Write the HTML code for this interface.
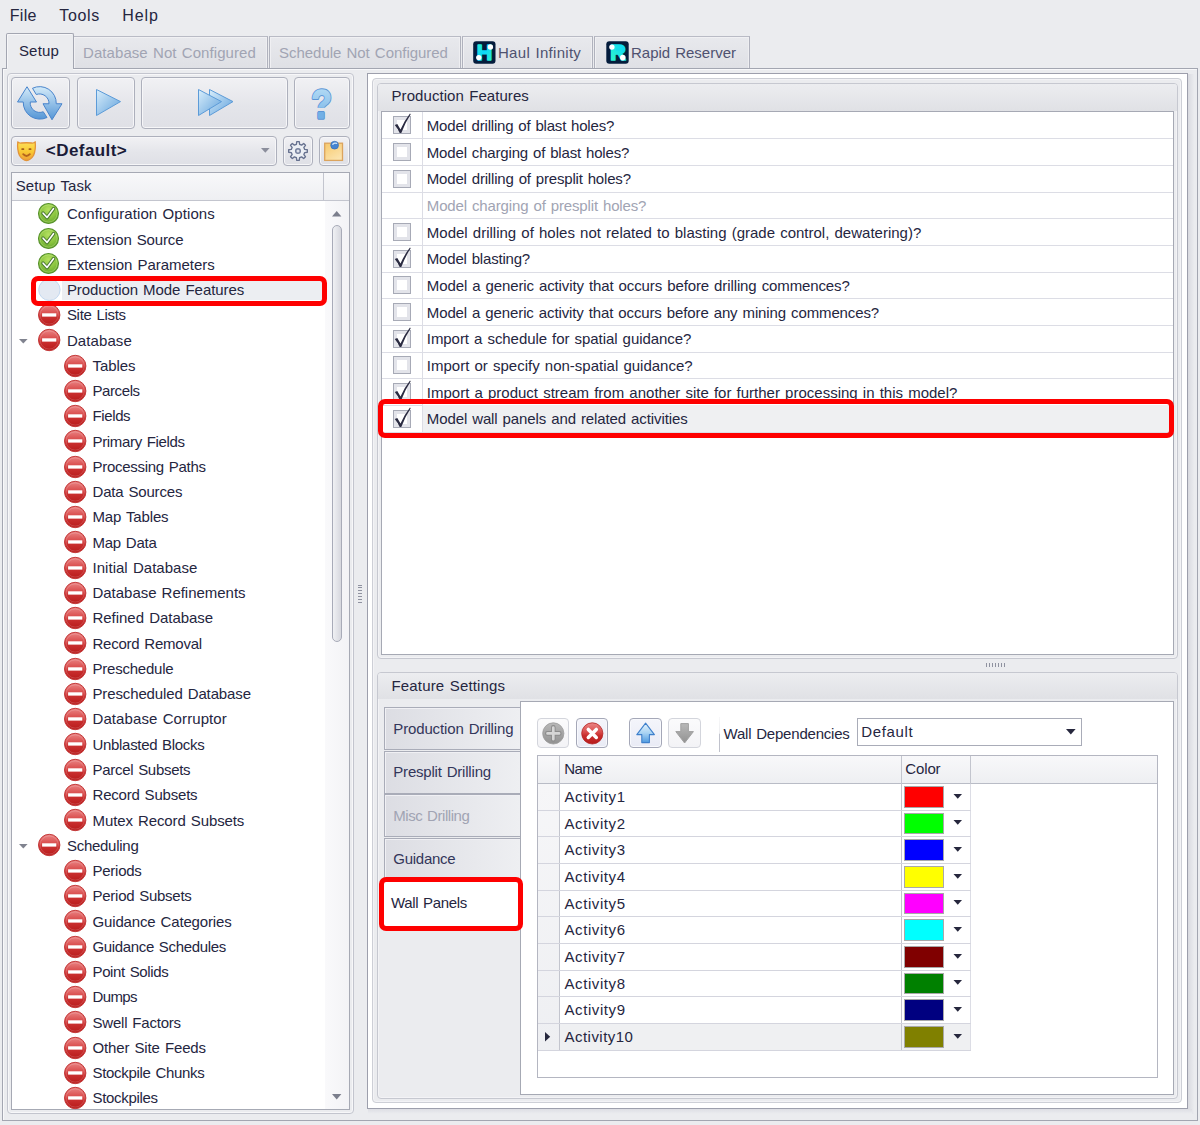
<!DOCTYPE html><html><head><meta charset="utf-8"><title>Setup</title><style>
*{box-sizing:border-box;margin:0;padding:0}
html,body{width:1200px;height:1125px;overflow:hidden}
body{background:#ebecef;font-family:"Liberation Sans",sans-serif;font-size:15px;color:#25263f;word-spacing:1px;position:relative}
.abs,.abs>*{position:absolute}
.t{white-space:nowrap;line-height:20px;height:20px}
.dis{color:#a1a4b3}
.tab{top:36px;height:32px;border:1px solid #b0b2bd;border-top-color:#b9bbc5;border-bottom:none;background:linear-gradient(#e8e9ed,#dfe0e5);box-shadow:inset 1px 1px 0 #f0f0f3,inset -1px 0 0 #eeeef1}
.tabsel{top:33px;height:36px;border:1px solid #a3a6b1;border-bottom:none;background:#ebecef;border-radius:2px 2px 0 0;box-shadow:inset 1px 1px 0 #f6f6f8}
.panel{border:1px solid #a3a6b1;box-shadow:inset 1px 1px 0 #f8f8fa}
.lpanel{border:1px solid #c3c5ce;border-radius:4px;box-shadow:inset 0 0 0 1px #f7f7f9}
.btn{border:1px solid #adb0bc;border-radius:4px;background:linear-gradient(#f1f1f4,#e4e5ea 55%,#dfe0e6);box-shadow:inset 0 0 0 1px #f6f6f8}
.box{border:1px solid #a6a9b4;background:#fff}
.hdr{background:linear-gradient(#f8f8fa,#eeeff2);border-bottom:1px solid #c3c5ce}
.gb{border:1px solid #c6c8d0;border-radius:4px;background:#ebecef;box-shadow:inset 0 0 0 1px #f3f3f6}
.gbh{background:linear-gradient(#ecedf0,#e0e1e5);border-radius:3px 3px 0 0}
.red{border:5.6px solid #fe0000;border-radius:7px}
.ln{background:#dcdde5;height:1px}
.vl{background:#dcdde5;width:1px}
.vtab{left:384px;width:136px;height:43px;border:1px solid #a9acb8;border-right:none;background:linear-gradient(90deg,#dcdde3,#eeeff2);box-shadow:inset 1px 1px 0 #f0f0f4}
.cb{width:18px;height:18px;border:1px solid #a7aab6;background:#fff;box-shadow:inset 0 0 0 3px #e3e4ea}
svg{overflow:visible}
</style></head><body class="abs">
<svg width="0" height="0" style="left:0;top:0"><defs>
<linearGradient id="gBlue" x1="0" y1="0" x2="0" y2="1"><stop offset="0" stop-color="#d4ebf9"/><stop offset="1" stop-color="#5596d6"/></linearGradient>
<linearGradient id="gBlue2" x1="0" y1="0" x2="0" y2="1"><stop offset="0" stop-color="#bfe3f8"/><stop offset="1" stop-color="#6aaae2"/></linearGradient>
<linearGradient id="gBlue3" x1="0" y1="0" x2="0" y2="1"><stop offset="0" stop-color="#e6f3fc"/><stop offset="0.5" stop-color="#a9d3f3"/><stop offset="1" stop-color="#4f9ae0"/></linearGradient>
<linearGradient id="gBlueH" x1="0" y1="0" x2="1" y2="1"><stop offset="0" stop-color="#d9eefb"/><stop offset="1" stop-color="#62a2dc"/></linearGradient>
<linearGradient id="gRed" x1="0" y1="0" x2="0" y2="1"><stop offset="0" stop-color="#ea8686"/><stop offset="0.42" stop-color="#da4e4e"/><stop offset="0.6" stop-color="#c92e2e"/><stop offset="1" stop-color="#b71a1a"/></linearGradient>
<radialGradient id="gGreen" cx="0.5" cy="0.3" r="0.75"><stop offset="0" stop-color="#b4e060"/><stop offset="0.6" stop-color="#86c23c"/><stop offset="1" stop-color="#5f9e2a"/></radialGradient>
<linearGradient id="gGray" x1="0" y1="0" x2="0" y2="1"><stop offset="0" stop-color="#b8b8b8"/><stop offset="1" stop-color="#929292"/></linearGradient>
<linearGradient id="gTeal" x1="0" y1="0" x2="1" y2="1"><stop offset="0" stop-color="#35f7c4"/><stop offset="0.45" stop-color="#0ad6fb"/><stop offset="1" stop-color="#35f7c4"/></linearGradient>
<linearGradient id="gTeal2" x1="1" y1="0" x2="0" y2="1"><stop offset="0" stop-color="#05d2ff"/><stop offset="1" stop-color="#35f7c4"/></linearGradient>
<linearGradient id="gMask" x1="0" y1="0" x2="0" y2="1"><stop offset="0" stop-color="#fde05a"/><stop offset="0.55" stop-color="#f9c832"/><stop offset="1" stop-color="#ee9e38"/></linearGradient>
<linearGradient id="gNote" x1="0" y1="0" x2="0.6" y2="1"><stop offset="0" stop-color="#f7c96c"/><stop offset="1" stop-color="#fbe3ad"/></linearGradient>
<g id="icRed"><circle cx="11.2" cy="11" r="10.7" fill="url(#gRed)" stroke="#c43a3a" stroke-width="1"/><circle cx="11.2" cy="11" r="9.1" fill="none" stroke="#fff" stroke-opacity="0.16" stroke-width="1"/><rect x="4.1" y="9.3" width="14.2" height="3.3" fill="#fff"/></g>
<g id="icGreen"><circle cx="10.5" cy="10.5" r="10" fill="url(#gGreen)" stroke="#55902a" stroke-width="1.1"/><circle cx="10.5" cy="10.5" r="8.6" fill="none" stroke="#d8f0a0" stroke-opacity="0.35" stroke-width="1"/><path d="M5 10.2 L9 14.6 L15.6 5.6" fill="none" stroke="#4c7a30" stroke-width="3.5" stroke-linecap="round" stroke-linejoin="round"/><path d="M5.1 10.2 L9 14.4 L15.5 5.7" fill="none" stroke="#fff" stroke-width="1.6" stroke-linecap="round" stroke-linejoin="round"/></g>
<path id="chk" d="M1.8 8.9 L4.3 8.1 L7.5 13.6 Q11.4 4.6 17 -2.4 L17.7 -1.7 Q12.2 6.6 8.3 17.1 L6.7 17.1 Q4.8 12.6 1.8 8.9Z" fill="#2a2b41"/>
</defs></svg>
<div class="t" style="left:9.7px;top:5.6px;letter-spacing:0.31px;font-size:16px;word-spacing:0px;">File</div>
<div class="t" style="left:59.2px;top:5.6px;letter-spacing:0.69px;font-size:16px;word-spacing:0px;">Tools</div>
<div class="t" style="left:122.3px;top:5.6px;letter-spacing:0.90px;font-size:16px;word-spacing:0px;">Help</div>
<div class="panel" style="left:2px;top:68px;width:1196px;height:1053px"></div>
<div class="tab" style="left:73px;width:194.6px"></div>
<div class="t dis" style="left:83.0px;top:42.8px;letter-spacing:0.07px;">Database Not Configured</div>
<div class="tab" style="left:268.6px;width:192.0px"></div>
<div class="t dis" style="left:279.0px;top:42.8px;letter-spacing:-0.03px;">Schedule Not Configured</div>
<div class="tab" style="left:461.6px;width:131.0px"></div>
<div class="t" style="left:498.0px;top:42.8px;letter-spacing:0.29px;color:#4f5270">Haul Infinity</div>
<div class="tab" style="left:593.8px;width:155.8px"></div>
<div class="t" style="left:631.0px;top:42.8px;letter-spacing:-0.02px;color:#4f5270">Rapid Reserver</div>
<div class="tabsel" style="left:6px;width:68px"></div><div style="left:7px;top:68px;width:66px;height:2px;background:#ebecef"></div>
<div class="t" style="left:18.9px;top:40.7px;letter-spacing:0.20px;">Setup</div>
<svg style="left:473px;top:41px" width="23" height="23" viewBox="0 0 23 23"><rect x="0.2" y="0.3" width="22.3" height="22.4" rx="3" fill="#041c3c"/>
<text x="11.55" y="19.1" text-anchor="middle" font-family="Liberation Sans, sans-serif" font-weight="bold" font-size="21.5" fill="url(#gTeal)" stroke="url(#gTeal)" stroke-width="1.5" stroke-linejoin="round">H</text>
<circle cx="5.8" cy="16.6" r="2.7" fill="#fff"/><circle cx="17.4" cy="6" r="2.7" fill="#fff"/></svg>
<svg style="left:606px;top:41px" width="23" height="23" viewBox="0 0 23 23"><rect x="0.3" y="0.3" width="22.4" height="22.4" rx="3" fill="#041c3c"/>
<rect x="8" y="5.4" width="8.5" height="6.2" fill="#14dcec"/><text x="12.1" y="19.1" text-anchor="middle" font-family="Liberation Sans, sans-serif" font-weight="bold" font-size="21.5" fill="url(#gTeal2)" stroke="url(#gTeal2)" stroke-width="1.7" stroke-linejoin="round">R</text>
<circle cx="5.9" cy="6.1" r="2.7" fill="#fff"/><circle cx="16.8" cy="16.6" r="2.8" fill="#fff"/></svg>
<div class="lpanel" style="left:7px;top:73px;width:347px;height:1041px"></div>
<div class="btn" style="left:11px;top:77px;width:59px;height:52px"></div>
<div class="btn" style="left:77px;top:77px;width:58px;height:52px"></div>
<div class="btn" style="left:141px;top:77px;width:147px;height:52px"></div>
<div class="btn" style="left:294px;top:77px;width:56px;height:52px"></div>
<svg style="left:10px;top:76px" width="60" height="54" viewBox="0 0 60 54">
<path d="M17 10.75 L26.5 26 L20.25 26 A9.5 9.5 0 0 0 33.25 35.75 L37 41.5 A16.6 16.6 0 0 1 13.25 26 L7.5 26 Z" fill="url(#gBlue)" stroke="#4884cc" stroke-width="1" stroke-linejoin="round"/>
<path d="M42 43.75 L33 27.75 L39 27.75 A9.5 9.5 0 0 0 26.25 18.5 L22.5 12.25 A16.6 16.6 0 0 1 46.25 27.75 L52 27.75 Z" fill="url(#gBlue)" stroke="#4884cc" stroke-width="1" stroke-linejoin="round"/></svg>
<svg style="left:95px;top:88px" width="28" height="30" viewBox="0 0 28 30"><path d="M1.5 1.5 L25.5 13.6 L1.5 27.5Z" fill="url(#gBlueH)" stroke="#5c9bd8" stroke-width="1" stroke-linejoin="round"/></svg>
<svg style="left:197px;top:88px" width="38" height="30" viewBox="0 0 38 30"><path d="M12.5 1.5 L36 13.6 L12.5 27.5Z" fill="url(#gBlueH)" stroke="#5c9bd8" stroke-width="1" stroke-linejoin="round"/><path d="M1.5 1.5 L24.5 13.6 L1.5 27.5Z" fill="url(#gBlueH)" stroke="#5c9bd8" stroke-width="1" stroke-linejoin="round"/></svg>
<svg style="left:304px;top:80px" width="36" height="46" viewBox="0 0 36 46"><defs><clipPath id="cTop"><rect x="-20" y="-40" width="40" height="31"/></clipPath><clipPath id="cBot"><rect x="-20" y="-7.4" width="40" height="12"/></clipPath></defs>
<g transform="translate(17.6 38.3) scale(0.85 1)" font-family="Liberation Sans, sans-serif" font-weight="bold" font-size="39" text-anchor="middle" stroke-linejoin="round"><g transform="translate(0 -1.5)" clip-path="url(#cTop)"><text x="0" y="0" fill="#5c95d6" stroke="#5c95d6" stroke-width="3.4">?</text><text x="0" y="0" fill="url(#gBlue2)" stroke="url(#gBlue2)" stroke-width="1.5">?</text></g><g clip-path="url(#cBot)" aria-hidden="true"><text x="0" y="0" fill="#5c95d6" stroke="#5c95d6" stroke-width="3.4">?</text><text x="0" y="0" fill="#72b0e6" stroke="#72b0e6" stroke-width="1.5">?</text></g></g></svg>
<div class="btn" style="left:11px;top:136px;width:266px;height:30px"></div>
<div class="btn" style="left:283px;top:136px;width:30px;height:30px"></div>
<div class="btn" style="left:319px;top:136px;width:31px;height:30px"></div>
<div class="t" style="left:45.8px;top:141.2px;letter-spacing:0.44px;font-size:17px;font-weight:bold;color:#1a1b38">&lt;Default&gt;</div>
<svg style="left:260.5px;top:148.3px" width="9" height="5" viewBox="0 0 9 5"><path d="M0 0 H8.6 L4.3 4.8Z" fill="#8b8e9c"/></svg>
<svg style="left:17.2px;top:141px" width="19" height="20" viewBox="0 0 19 20"><path d="M0.8 0.8 Q2 2.3 4.5 2 Q9.5 1.5 14.5 2 Q17 2.3 18.2 0.8 Q19 9 16.5 14.5 Q13.5 19.3 9.5 19.5 Q5.5 19.3 2.5 14.5 Q0 9 0.8 0.8Z" fill="url(#gMask)" stroke="#e2943a" stroke-width="1.3" stroke-linejoin="round"/>
<rect x="4.4" y="7.3" width="2.8" height="1.6" rx="0.5" fill="#a5601c"/><rect x="11.6" y="7.3" width="2.8" height="1.6" rx="0.5" fill="#a5601c"/>
<path d="M6.2 13.2 Q9.5 16.8 12.8 13.2" fill="none" stroke="#b5651d" stroke-width="1.9" stroke-linecap="round"/></svg>
<svg style="left:286.85px;top:140px" width="22" height="22" viewBox="0 0 22 22"><path d="M17.71 9.39 L20.32 9.75 L20.32 12.25 L17.71 12.61 L16.88 14.61 L18.47 16.70 L16.70 18.47 L14.61 16.88 L12.61 17.71 L12.25 20.32 L9.75 20.32 L9.39 17.71 L7.39 16.88 L5.30 18.47 L3.53 16.70 L5.12 14.61 L4.29 12.61 L1.68 12.25 L1.68 9.75 L4.29 9.39 L5.12 7.39 L3.53 5.30 L5.30 3.53 L7.39 5.12 L9.39 4.29 L9.75 1.68 L12.25 1.68 L12.61 4.29 L14.61 5.12 L16.70 3.53 L18.47 5.30 L16.88 7.39Z" fill="#eceff4" stroke="#66718f" stroke-width="1.35" stroke-linejoin="round"/><circle cx="11" cy="11" r="2.3" fill="#dfe3ec" stroke="#76819e" stroke-width="1.5"/></svg>
<svg style="left:323px;top:139px" width="22" height="24" viewBox="0 0 22 24"><rect x="1.7" y="4.2" width="17.8" height="17.2" fill="url(#gNote)" stroke="#dba45e" stroke-width="1.3"/><circle cx="11.6" cy="6.2" r="3.9" fill="#4585d2" stroke="#3a70b6" stroke-width="0.7"/><path d="M9.8 5.2 Q11.4 3.4 13.6 4.4" fill="none" stroke="#cfe4f8" stroke-width="1.3" stroke-linecap="round"/></svg>
<div class="box" style="left:11px;top:172px;width:339px;height:938px"></div>
<div class="hdr" style="left:12px;top:173px;width:337px;height:28px"></div>
<div style="left:323px;top:173px;width:1px;height:27px;background:#c3c5ce"></div>
<div class="t" style="left:15.7px;top:176.3px;letter-spacing:0.11px;">Setup Task</div>
<div style="left:325px;top:201px;width:24px;height:908px;background:linear-gradient(90deg,#f9f9fb,#f3f3f6)"></div>
<svg style="left:332px;top:211px" width="10" height="6" viewBox="0 0 10 6"><path d="M0 5.4 H9.4 L4.7 0Z" fill="#7c7f8d"/></svg>
<svg style="left:331.5px;top:1094px" width="10" height="6" viewBox="0 0 10 6"><path d="M0 0 H9.4 L4.7 5.4Z" fill="#7c7f8d"/></svg>
<div style="left:332px;top:225px;width:10px;height:417px;border:1px solid #a8abb8;border-radius:5px;background:linear-gradient(90deg,#f0f1f4,#d6d7de)"></div>
<svg style="left:38.3px;top:202.7px" width="21" height="21"><use href="#icGreen"/></svg>
<div class="t" style="left:66.9px;top:204.3px;letter-spacing:0.09px;">Configuration Options</div>
<svg style="left:38.3px;top:228.0px" width="21" height="21"><use href="#icGreen"/></svg>
<div class="t" style="left:66.9px;top:229.6px;letter-spacing:-0.13px;">Extension Source</div>
<svg style="left:38.3px;top:253.2px" width="21" height="21"><use href="#icGreen"/></svg>
<div class="t" style="left:66.9px;top:254.8px;letter-spacing:-0.04px;">Extension Parameters</div>
<div style="left:62px;top:280.1px;width:263px;height:20px;background:#eceef2"></div>
<svg style="left:38.3px;top:279.4px" width="23" height="23"><circle cx="11.4" cy="10.8" r="10.7" fill="#e3e9f2" stroke="#c4d9f0" stroke-width="1"/></svg>
<div class="t" style="left:66.9px;top:280.1px;letter-spacing:-0.06px;">Production Mode Features</div>
<svg style="left:38.1px;top:304.0px" width="23" height="22"><use href="#icRed"/></svg>
<div class="t" style="left:66.9px;top:305.3px;letter-spacing:-0.30px;">Site Lists</div>
<svg style="left:38.1px;top:329.3px" width="23" height="22"><use href="#icRed"/></svg>
<svg style="left:19px;top:338.9px" width="9" height="5" viewBox="0 0 9 5"><path d="M0 0 H8.6 L4.3 4.6Z" fill="#80838f"/></svg>
<div class="t" style="left:66.9px;top:330.6px;letter-spacing:0.10px;">Database</div>
<svg style="left:63.6px;top:354.5px" width="23" height="22"><use href="#icRed"/></svg>
<div class="t" style="left:92.5px;top:355.8px;letter-spacing:-0.05px;">Tables</div>
<svg style="left:63.6px;top:379.8px" width="23" height="22"><use href="#icRed"/></svg>
<div class="t" style="left:92.5px;top:381.1px;letter-spacing:-0.41px;">Parcels</div>
<svg style="left:63.6px;top:405.1px" width="23" height="22"><use href="#icRed"/></svg>
<div class="t" style="left:92.5px;top:406.4px;letter-spacing:-0.38px;">Fields</div>
<svg style="left:63.6px;top:430.3px" width="23" height="22"><use href="#icRed"/></svg>
<div class="t" style="left:92.5px;top:431.6px;letter-spacing:-0.33px;">Primary Fields</div>
<svg style="left:63.6px;top:455.6px" width="23" height="22"><use href="#icRed"/></svg>
<div class="t" style="left:92.5px;top:456.9px;letter-spacing:-0.28px;">Processing Paths</div>
<svg style="left:63.6px;top:480.8px" width="23" height="22"><use href="#icRed"/></svg>
<div class="t" style="left:92.5px;top:482.1px;letter-spacing:-0.18px;">Data Sources</div>
<svg style="left:63.6px;top:506.1px" width="23" height="22"><use href="#icRed"/></svg>
<div class="t" style="left:92.5px;top:507.4px;letter-spacing:-0.15px;">Map Tables</div>
<svg style="left:63.6px;top:531.3px" width="23" height="22"><use href="#icRed"/></svg>
<div class="t" style="left:92.5px;top:532.6px;letter-spacing:-0.25px;">Map Data</div>
<svg style="left:63.6px;top:556.6px" width="23" height="22"><use href="#icRed"/></svg>
<div class="t" style="left:92.5px;top:557.9px;letter-spacing:0.03px;">Initial Database</div>
<svg style="left:63.6px;top:581.9px" width="23" height="22"><use href="#icRed"/></svg>
<div class="t" style="left:92.5px;top:583.2px;letter-spacing:-0.03px;">Database Refinements</div>
<svg style="left:63.6px;top:607.1px" width="23" height="22"><use href="#icRed"/></svg>
<div class="t" style="left:92.5px;top:608.4px;letter-spacing:-0.03px;">Refined Database</div>
<svg style="left:63.6px;top:632.4px" width="23" height="22"><use href="#icRed"/></svg>
<div class="t" style="left:92.5px;top:633.7px;letter-spacing:-0.24px;">Record Removal</div>
<svg style="left:63.6px;top:657.6px" width="23" height="22"><use href="#icRed"/></svg>
<div class="t" style="left:92.5px;top:658.9px;letter-spacing:-0.23px;">Preschedule</div>
<svg style="left:63.6px;top:682.9px" width="23" height="22"><use href="#icRed"/></svg>
<div class="t" style="left:92.5px;top:684.2px;letter-spacing:-0.13px;">Prescheduled Database</div>
<svg style="left:63.6px;top:708.1px" width="23" height="22"><use href="#icRed"/></svg>
<div class="t" style="left:92.5px;top:709.4px;letter-spacing:0.09px;">Database Corruptor</div>
<svg style="left:63.6px;top:733.4px" width="23" height="22"><use href="#icRed"/></svg>
<div class="t" style="left:92.5px;top:734.7px;letter-spacing:-0.31px;">Unblasted Blocks</div>
<svg style="left:63.6px;top:758.7px" width="23" height="22"><use href="#icRed"/></svg>
<div class="t" style="left:92.5px;top:760.0px;letter-spacing:-0.29px;">Parcel Subsets</div>
<svg style="left:63.6px;top:783.9px" width="23" height="22"><use href="#icRed"/></svg>
<div class="t" style="left:92.5px;top:785.2px;letter-spacing:-0.20px;">Record Subsets</div>
<svg style="left:63.6px;top:809.2px" width="23" height="22"><use href="#icRed"/></svg>
<div class="t" style="left:92.5px;top:810.5px;letter-spacing:-0.10px;">Mutex Record Subsets</div>
<svg style="left:38.1px;top:834.4px" width="23" height="22"><use href="#icRed"/></svg>
<svg style="left:19px;top:844.0px" width="9" height="5" viewBox="0 0 9 5"><path d="M0 0 H8.6 L4.3 4.6Z" fill="#80838f"/></svg>
<div class="t" style="left:66.9px;top:835.7px;letter-spacing:-0.26px;">Scheduling</div>
<svg style="left:63.6px;top:859.7px" width="23" height="22"><use href="#icRed"/></svg>
<div class="t" style="left:92.5px;top:861.0px;letter-spacing:-0.26px;">Periods</div>
<svg style="left:63.6px;top:884.9px" width="23" height="22"><use href="#icRed"/></svg>
<div class="t" style="left:92.5px;top:886.2px;letter-spacing:-0.26px;">Period Subsets</div>
<svg style="left:63.6px;top:910.2px" width="23" height="22"><use href="#icRed"/></svg>
<div class="t" style="left:92.5px;top:911.5px;letter-spacing:-0.15px;">Guidance Categories</div>
<svg style="left:63.6px;top:935.5px" width="23" height="22"><use href="#icRed"/></svg>
<div class="t" style="left:92.5px;top:936.8px;letter-spacing:-0.34px;">Guidance Schedules</div>
<svg style="left:63.6px;top:960.7px" width="23" height="22"><use href="#icRed"/></svg>
<div class="t" style="left:92.5px;top:962.0px;letter-spacing:-0.37px;">Point Solids</div>
<svg style="left:63.6px;top:986.0px" width="23" height="22"><use href="#icRed"/></svg>
<div class="t" style="left:92.5px;top:987.3px;letter-spacing:-0.60px;">Dumps</div>
<svg style="left:63.6px;top:1011.2px" width="23" height="22"><use href="#icRed"/></svg>
<div class="t" style="left:92.5px;top:1012.5px;letter-spacing:-0.20px;">Swell Factors</div>
<svg style="left:63.6px;top:1036.5px" width="23" height="22"><use href="#icRed"/></svg>
<div class="t" style="left:92.5px;top:1037.8px;letter-spacing:-0.12px;">Other Site Feeds</div>
<svg style="left:63.6px;top:1061.7px" width="23" height="22"><use href="#icRed"/></svg>
<div class="t" style="left:92.5px;top:1063.0px;letter-spacing:-0.31px;">Stockpile Chunks</div>
<svg style="left:63.6px;top:1087.0px" width="23" height="22"><use href="#icRed"/></svg>
<div class="t" style="left:92.5px;top:1088.3px;letter-spacing:-0.31px;">Stockpiles</div>
<div class="red" style="left:31px;top:276px;width:296px;height:30.2px"></div>
<div style="left:358px;top:584.5px;width:4px;height:1px;background:#8f92a0"></div>
<div style="left:358px;top:587.4px;width:4px;height:1px;background:#8f92a0"></div>
<div style="left:358px;top:590.3px;width:4px;height:1px;background:#8f92a0"></div>
<div style="left:358px;top:593.2px;width:4px;height:1px;background:#8f92a0"></div>
<div style="left:358px;top:596.1px;width:4px;height:1px;background:#8f92a0"></div>
<div style="left:358px;top:599.0px;width:4px;height:1px;background:#8f92a0"></div>
<div style="left:358px;top:601.9px;width:4px;height:1px;background:#8f92a0"></div>
<div style="left:1188px;top:74px;width:9px;height:1040px;background:linear-gradient(90deg,#d9dae0,#ebecef 70%)"></div>
<div style="left:368px;top:1109px;width:824px;height:6px;background:linear-gradient(#dddee4,#ebecef 80%)"></div>
<div style="left:367px;top:73px;width:821px;height:1036px;border:1px solid #9d9fac;background:#fff"></div>
<div style="left:372px;top:78px;width:810px;height:1025px;border:1px solid #cdcfd6;border-radius:4px;background:#ebecef;box-shadow:inset 0 0 0 1px #f3f3f6"></div>
<div class="gb" style="left:377px;top:83px;width:801px;height:576px"></div>
<div class="gbh" style="left:378px;top:84px;width:799px;height:27px"></div>
<div class="t" style="left:391.5px;top:86.3px;letter-spacing:0.07px;">Production Features</div>
<div class="box" style="left:381px;top:111px;width:793px;height:544px"></div>
<div class="vl" style="left:422px;top:112px;height:320px"></div>
<div class="ln" style="left:382px;top:138.2px;width:791px"></div>
<div class="cb" style="left:393px;top:116.2px"></div>
<svg style="left:393px;top:116.2px" width="18" height="18"><use href="#chk"/></svg>
<div class="t" style="left:426.8px;top:116.0px;letter-spacing:-0.20px;">Model drilling of blast holes?</div>
<div class="ln" style="left:382px;top:164.9px;width:791px"></div>
<div class="cb" style="left:393px;top:142.9px"></div>
<div class="t" style="left:426.8px;top:142.7px;letter-spacing:-0.17px;">Model charging of blast holes?</div>
<div class="ln" style="left:382px;top:191.5px;width:791px"></div>
<div class="cb" style="left:393px;top:169.5px"></div>
<div class="t" style="left:426.8px;top:169.3px;letter-spacing:-0.18px;">Model drilling of presplit holes?</div>
<div class="ln" style="left:382px;top:218.2px;width:791px"></div>
<div class="t dis" style="left:426.8px;top:196.0px;letter-spacing:-0.14px;">Model charging of presplit holes?</div>
<div class="ln" style="left:382px;top:244.9px;width:791px"></div>
<div class="cb" style="left:393px;top:222.9px"></div>
<div class="t" style="left:426.8px;top:222.7px;">Model drilling of holes not related to blasting (grade control, dewatering)?</div>
<div class="ln" style="left:382px;top:271.5px;width:791px"></div>
<div class="cb" style="left:393px;top:249.5px"></div>
<svg style="left:393px;top:249.5px" width="18" height="18"><use href="#chk"/></svg>
<div class="t" style="left:426.8px;top:249.3px;letter-spacing:-0.19px;">Model blasting?</div>
<div class="ln" style="left:382px;top:298.2px;width:791px"></div>
<div class="cb" style="left:393px;top:276.2px"></div>
<div class="t" style="left:426.8px;top:276.0px;letter-spacing:-0.11px;">Model a generic activity that occurs before drilling commences?</div>
<div class="ln" style="left:382px;top:324.9px;width:791px"></div>
<div class="cb" style="left:393px;top:302.9px"></div>
<div class="t" style="left:426.8px;top:302.7px;letter-spacing:-0.12px;">Model a generic activity that occurs before any mining commences?</div>
<div class="ln" style="left:382px;top:351.5px;width:791px"></div>
<div class="cb" style="left:393px;top:329.5px"></div>
<svg style="left:393px;top:329.5px" width="18" height="18"><use href="#chk"/></svg>
<div class="t" style="left:426.8px;top:329.3px;letter-spacing:-0.06px;">Import a schedule for spatial guidance?</div>
<div class="ln" style="left:382px;top:378.2px;width:791px"></div>
<div class="cb" style="left:393px;top:356.2px"></div>
<div class="t" style="left:426.8px;top:356.0px;">Import or specify non-spatial guidance?</div>
<div class="ln" style="left:382px;top:404.9px;width:791px"></div>
<div class="cb" style="left:393px;top:382.9px"></div>
<svg style="left:393px;top:382.9px" width="18" height="18"><use href="#chk"/></svg>
<div class="t" style="left:426.8px;top:382.7px;">Import a product stream from another site for further processing in this model?</div>
<div style="left:423px;top:405.3px;width:750px;height:27px;background:#eff0f2"></div>
<div class="vl" style="left:422px;top:405.3px;height:27px"></div>
<div class="ln" style="left:382px;top:431.5px;width:791px"></div>
<div class="cb" style="left:393px;top:409.5px"></div>
<svg style="left:393px;top:409.5px" width="18" height="18"><use href="#chk"/></svg>
<div class="t" style="left:426.8px;top:409.3px;letter-spacing:-0.11px;">Model wall panels and related activities</div>
<div class="red" style="left:378px;top:399px;width:796px;height:38.5px"></div>
<div style="left:986.3px;top:663px;width:1px;height:4px;background:#8f92a0"></div>
<div style="left:989.2px;top:663px;width:1px;height:4px;background:#8f92a0"></div>
<div style="left:992.1px;top:663px;width:1px;height:4px;background:#8f92a0"></div>
<div style="left:995.0px;top:663px;width:1px;height:4px;background:#8f92a0"></div>
<div style="left:997.9px;top:663px;width:1px;height:4px;background:#8f92a0"></div>
<div style="left:1000.8px;top:663px;width:1px;height:4px;background:#8f92a0"></div>
<div style="left:1003.7px;top:663px;width:1px;height:4px;background:#8f92a0"></div>
<div class="gb" style="left:377px;top:672px;width:801px;height:427px"></div>
<div class="gbh" style="left:378px;top:673px;width:799px;height:26px"></div>
<div class="t" style="left:391.5px;top:676.3px;letter-spacing:0.17px;">Feature Settings</div>
<div class="box" style="left:520px;top:701px;width:654px;height:394px"></div>
<div class="vtab" style="top:707.0px"></div>
<div class="t" style="left:393.3px;top:718.7px;letter-spacing:-0.14px;color:#33365a">Production Drilling</div>
<div class="vtab" style="top:750.5px"></div>
<div class="t" style="left:393.3px;top:762.2px;letter-spacing:-0.20px;color:#33365a">Presplit Drilling</div>
<div class="vtab" style="top:794.1px"></div>
<div class="t dis" style="left:393.3px;top:805.8px;letter-spacing:-0.44px;">Misc Drilling</div>
<div class="vtab" style="top:837.6px"></div>
<div class="t" style="left:393.3px;top:849.4px;letter-spacing:-0.27px;color:#33365a">Guidance</div>
<div style="left:382px;top:880px;width:139px;height:47px;background:#fff;border:1px solid #a9acb8;border-right:none"></div>
<div class="t" style="left:391.0px;top:893.0px;letter-spacing:-0.34px;">Wall Panels</div>
<div class="red" style="left:379px;top:876.5px;width:143.5px;height:54.5px"></div>
<div style="left:536.7px;top:718.2px;width:32.6px;height:30px;border:1px solid #d3d5dc;border-radius:4px;background:linear-gradient(#fbfbfc,#f3f3f6)"></div>
<div style="left:575.7px;top:718.2px;width:32.8px;height:30px;border:1px solid #a5a8b8;border-radius:4px;background:linear-gradient(#f4f5fb,#e9ebf5);box-shadow:inset 0 0 0 1px #f8f9fd"></div>
<div style="left:629px;top:718.2px;width:33px;height:30px;border:1px solid #a5a8b8;border-radius:4px;background:linear-gradient(#f4f5fb,#e9ebf5);box-shadow:inset 0 0 0 1px #f8f9fd"></div>
<div style="left:668.2px;top:718.2px;width:32.8px;height:30px;border:1px solid #d3d5dc;border-radius:4px;background:linear-gradient(#fbfbfc,#f3f3f6)"></div>
<svg style="left:542px;top:722px" width="23" height="23" viewBox="0 0 23 23"><circle cx="11.3" cy="11.4" r="10.6" fill="url(#gGray)" stroke="#9a9a9a" stroke-width="0.8"/><path d="M11.3 5.4 V17.4 M5.3 11.4 H17.3" stroke="#8c8c8c" stroke-width="4.6" stroke-linecap="round"/><path d="M11.3 5.6 V17.2 M5.5 11.4 H17.1" stroke="#d6d6d6" stroke-width="2.7" stroke-linecap="round"/></svg>
<svg style="left:581px;top:722px" width="23" height="23" viewBox="0 0 23 23"><circle cx="11.3" cy="11.4" r="10.6" fill="url(#gRed)" stroke="#b22222" stroke-width="0.8"/><path d="M7.3 7.4 L15.3 15.4 M15.3 7.4 L7.3 15.4" stroke="#fff" stroke-width="3.5" stroke-linecap="round"/></svg>
<svg style="left:636px;top:722px" width="20" height="23" viewBox="0 0 20 23"><path d="M9.6 1.2 L18.4 12.6 H13.4 V20.6 H5.8 V12.6 H0.8Z" fill="url(#gBlue3)" stroke="#3f80cc" stroke-width="1.1" stroke-linejoin="round"/></svg>
<svg style="left:675px;top:722px" width="20" height="23" viewBox="0 0 20 23"><path d="M9.6 21 L18.4 9.6 H13.4 V1.6 H5.8 V9.6 H0.8Z" fill="url(#gGray)" stroke="#a0a0a0" stroke-width="1" stroke-linejoin="round"/></svg>
<div style="left:718.6px;top:717px;width:1.4px;height:35px;background:linear-gradient(rgba(194,196,206,.12),rgba(194,196,206,.3) 46%,#c0c2cc 50%,#c0c2cc)"></div>
<div class="t" style="left:723.5px;top:723.7px;letter-spacing:-0.21px;">Wall Dependencies</div>
<div style="left:857px;top:718px;width:225px;height:28px;border:1px solid #a9acb8;background:#fff"></div>
<div class="t" style="left:861.3px;top:722.3px;letter-spacing:0.63px;">Default</div>
<svg style="left:1066px;top:729px" width="10" height="6" viewBox="0 0 10 6"><path d="M0 0 H9.6 L4.8 5.4Z" fill="#26273d"/></svg>
<div class="box" style="left:536.5px;top:754.5px;width:621px;height:323.5px;border-color:#b4b6c1"></div>
<div class="hdr" style="left:537.5px;top:755.5px;width:619px;height:28px;border-bottom-color:#b9bcc6"></div>
<div style="left:537.5px;top:783.5px;width:21.5px;height:267px;background:linear-gradient(#f6f6f8,#eeeff2)"></div>
<div style="left:559px;top:755.5px;width:1px;height:295px;background:#c3c5ce"></div>
<div style="left:901px;top:755.5px;width:1px;height:295px;background:#c3c5ce"></div>
<div style="left:970px;top:755.5px;width:1px;height:28px;background:#c3c5ce"></div>
<div class="vl" style="left:970px;top:783.5px;height:267px"></div>
<div class="t" style="left:564.3px;top:759.3px;letter-spacing:-0.57px;">Name</div>
<div class="t" style="left:905.3px;top:759.3px;letter-spacing:-0.14px;">Color</div>
<div class="ln" style="left:537.5px;top:809.5px;width:433px;background:#d4d5de"></div>
<div class="t" style="left:564.5px;top:787.1px;letter-spacing:0.58px;">Activity1</div>
<div style="left:904px;top:786.1px;width:40px;height:21.5px;background:#ff0000;border:1px solid #a9a9a9"></div>
<svg style="left:953px;top:793.7px" width="10" height="6" viewBox="0 0 10 6"><path d="M0.5 0 H9 L4.75 4.8Z" fill="#26273d"/></svg>
<div class="ln" style="left:537.5px;top:836.2px;width:433px;background:#d4d5de"></div>
<div class="t" style="left:564.5px;top:813.8px;letter-spacing:0.58px;">Activity2</div>
<div style="left:904px;top:812.8px;width:40px;height:21.5px;background:#00ff00;border:1px solid #a9a9a9"></div>
<svg style="left:953px;top:820.4px" width="10" height="6" viewBox="0 0 10 6"><path d="M0.5 0 H9 L4.75 4.8Z" fill="#26273d"/></svg>
<div class="ln" style="left:537.5px;top:862.8px;width:433px;background:#d4d5de"></div>
<div class="t" style="left:564.5px;top:840.4px;letter-spacing:0.58px;">Activity3</div>
<div style="left:904px;top:839.4px;width:40px;height:21.5px;background:#0000ff;border:1px solid #a9a9a9"></div>
<svg style="left:953px;top:847.0px" width="10" height="6" viewBox="0 0 10 6"><path d="M0.5 0 H9 L4.75 4.8Z" fill="#26273d"/></svg>
<div class="ln" style="left:537.5px;top:889.5px;width:433px;background:#d4d5de"></div>
<div class="t" style="left:564.5px;top:867.1px;letter-spacing:0.58px;">Activity4</div>
<div style="left:904px;top:866.1px;width:40px;height:21.5px;background:#ffff00;border:1px solid #a9a9a9"></div>
<svg style="left:953px;top:873.7px" width="10" height="6" viewBox="0 0 10 6"><path d="M0.5 0 H9 L4.75 4.8Z" fill="#26273d"/></svg>
<div class="ln" style="left:537.5px;top:916.2px;width:433px;background:#d4d5de"></div>
<div class="t" style="left:564.5px;top:893.8px;letter-spacing:0.58px;">Activity5</div>
<div style="left:904px;top:892.8px;width:40px;height:21.5px;background:#ff00ff;border:1px solid #a9a9a9"></div>
<svg style="left:953px;top:900.4px" width="10" height="6" viewBox="0 0 10 6"><path d="M0.5 0 H9 L4.75 4.8Z" fill="#26273d"/></svg>
<div class="ln" style="left:537.5px;top:942.8px;width:433px;background:#d4d5de"></div>
<div class="t" style="left:564.5px;top:920.4px;letter-spacing:0.58px;">Activity6</div>
<div style="left:904px;top:919.4px;width:40px;height:21.5px;background:#00ffff;border:1px solid #a9a9a9"></div>
<svg style="left:953px;top:927.0px" width="10" height="6" viewBox="0 0 10 6"><path d="M0.5 0 H9 L4.75 4.8Z" fill="#26273d"/></svg>
<div class="ln" style="left:537.5px;top:969.5px;width:433px;background:#d4d5de"></div>
<div class="t" style="left:564.5px;top:947.1px;letter-spacing:0.58px;">Activity7</div>
<div style="left:904px;top:946.1px;width:40px;height:21.5px;background:#800000;border:1px solid #a9a9a9"></div>
<svg style="left:953px;top:953.7px" width="10" height="6" viewBox="0 0 10 6"><path d="M0.5 0 H9 L4.75 4.8Z" fill="#26273d"/></svg>
<div class="ln" style="left:537.5px;top:996.2px;width:433px;background:#d4d5de"></div>
<div class="t" style="left:564.5px;top:973.8px;letter-spacing:0.58px;">Activity8</div>
<div style="left:904px;top:972.8px;width:40px;height:21.5px;background:#008000;border:1px solid #a9a9a9"></div>
<svg style="left:953px;top:980.4px" width="10" height="6" viewBox="0 0 10 6"><path d="M0.5 0 H9 L4.75 4.8Z" fill="#26273d"/></svg>
<div class="ln" style="left:537.5px;top:1022.8px;width:433px;background:#d4d5de"></div>
<div class="t" style="left:564.5px;top:1000.4px;letter-spacing:0.58px;">Activity9</div>
<div style="left:904px;top:999.4px;width:40px;height:21.5px;background:#000080;border:1px solid #a9a9a9"></div>
<svg style="left:953px;top:1007.0px" width="10" height="6" viewBox="0 0 10 6"><path d="M0.5 0 H9 L4.75 4.8Z" fill="#26273d"/></svg>
<div style="left:560px;top:1023.5px;width:341px;height:26px;background:#eff0f2"></div><div style="left:902px;top:1023.5px;width:68px;height:26px;background:#eff0f2"></div>
<svg style="left:545px;top:1032.0px" width="6" height="10" viewBox="0 0 6 10"><path d="M0 0 V9.6 L5.2 4.8Z" fill="#26273d"/></svg>
<div class="ln" style="left:537.5px;top:1049.5px;width:433px;background:#d4d5de"></div>
<div class="t" style="left:564.5px;top:1027.1px;letter-spacing:0.47px;">Activity10</div>
<div style="left:904px;top:1026.1px;width:40px;height:21.5px;background:#808000;border:1px solid #a9a9a9"></div>
<svg style="left:953px;top:1033.7px" width="10" height="6" viewBox="0 0 10 6"><path d="M0.5 0 H9 L4.75 4.8Z" fill="#26273d"/></svg>
</body></html>
